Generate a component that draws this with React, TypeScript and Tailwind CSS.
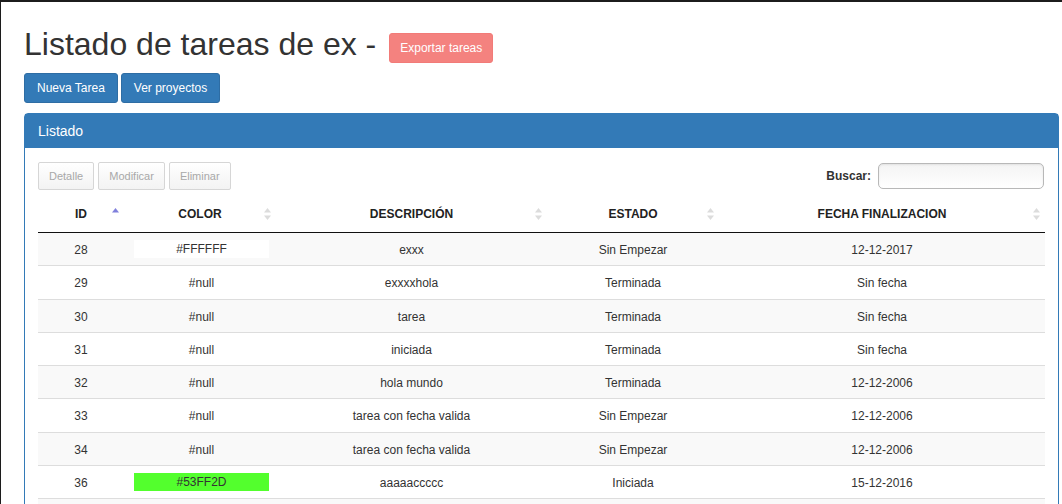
import React from 'react';

type Row = {
  id: string;
  color: string;
  swatch?: string;
  desc: string;
  estado: string;
  fecha: string;
};

const rows: Row[] = [
  { id: '28', color: '#FFFFFF', swatch: '#ffffff', desc: 'exxx', estado: 'Sin Empezar', fecha: '12-12-2017' },
  { id: '29', color: '#null', desc: 'exxxxhola', estado: 'Terminada', fecha: 'Sin fecha' },
  { id: '30', color: '#null', desc: 'tarea', estado: 'Terminada', fecha: 'Sin fecha' },
  { id: '31', color: '#null', desc: 'iniciada', estado: 'Terminada', fecha: 'Sin fecha' },
  { id: '32', color: '#null', desc: 'hola mundo', estado: 'Terminada', fecha: '12-12-2006' },
  { id: '33', color: '#null', desc: 'tarea con fecha valida', estado: 'Sin Empezar', fecha: '12-12-2006' },
  { id: '34', color: '#null', desc: 'tarea con fecha valida', estado: 'Sin Empezar', fecha: '12-12-2006' },
  { id: '36', color: '#53FF2D', swatch: '#53ff2d', desc: 'aaaaaccccc', estado: 'Iniciada', fecha: '15-12-2016' },
];

function SortIcon({ active }: { active?: boolean }) {
  return (
    <svg
      width="7"
      height="12"
      viewBox="0 0 7 12"
      className="absolute right-[5px] top-1/2 -translate-y-1/2"
    >
      <path d="M0 4.5 L3.5 0 L7 4.5 Z" fill={active ? '#8080dc' : '#dcdcdc'} />
      {!active && <path d="M0 7.5 L7 7.5 L3.5 12 Z" fill="#dcdcdc" />}
    </svg>
  );
}

const headers = [
  { label: 'ID', active: true },
  { label: 'COLOR' },
  { label: 'DESCRIPCIÓN' },
  { label: 'ESTADO' },
  { label: 'FECHA FINALIZACION' },
];

export default function App() {
  return (
    <div
      className="w-[1062px] h-[504px] overflow-hidden bg-white border-t-2 border-l border-[#1c1c1c] pl-[23px] pt-[25px] text-[#333]"
      style={{ fontFamily: '"Liberation Sans", Arial, sans-serif' }}
    >
      <div className="flex items-start">
        <h1 className="text-[32px] leading-[1.1] font-normal text-[#333]">Listado de tareas de ex -</h1>
        <button className="ml-[13px] mt-[6px] px-[10px] py-[5px] text-[12px] leading-[18px] text-white bg-[#f4827f] border border-[#f27b78] rounded-[3px]">
          Exportar tareas
        </button>
      </div>

      <div className="flex gap-[3px] mt-[10px]">
        <button className="px-3 py-[5px] text-[12px] leading-[18px] text-white bg-[#337ab7] border border-[#2e6da4] rounded-[3px]">
          Nueva Tarea
        </button>
        <button className="px-3 py-[5px] text-[12px] leading-[18px] text-white bg-[#337ab7] border border-[#2e6da4] rounded-[3px]">
          Ver proyectos
        </button>
      </div>

      <div className="mt-[10px] w-[1035px] border border-[#337ab7] rounded-t-[4px]">
        <div className="bg-[#337ab7] text-white text-[14px] leading-[18px] px-[13px] pt-[8px] pb-[8px]">Listado</div>
        <div className="px-[13px] pt-[14px]">
          <div className="flex items-center justify-between">
            <div className="flex gap-[4px]">
              {['Detalle', 'Modificar', 'Eliminar'].map((b) => (
                <button
                  key={b}
                  className="h-[28px] px-[10px] text-[11px] text-[#a8a8a8] bg-gradient-to-b from-white to-[#f3f3f3] border border-[#d6d6d6] rounded-[2px]"
                >
                  {b}
                </button>
              ))}
            </div>
            <div className="flex items-center mr-[1px]">
              <span className="text-[12px] font-bold text-[#333]">Buscar:</span>
              <input className="ml-[7px] w-[166px] h-[26px] border border-[#b8b8b8] rounded-[5px] bg-gradient-to-b from-[#f4f4f4] to-white shadow-[inset_0_1px_2px_rgba(0,0,0,0.08)] outline-none" />
            </div>
          </div>

          <table className="mt-[6px] w-[1007px] table-fixed border-collapse text-[12px]">
            <colgroup>
              <col className="w-[86px]" />
              <col className="w-[152px]" />
              <col className="w-[271px]" />
              <col className="w-[172px]" />
              <col className="w-[326px]" />
            </colgroup>
            <thead>
              <tr>
                {headers.map((h) => (
                  <th
                    key={h.label}
                    className="relative pt-[10px] pb-[9px] px-[10px] leading-[17px] font-bold text-center text-[#222] border-b border-[#111]"
                  >
                    {h.label}
                    <SortIcon active={h.active} />
                  </th>
                ))}
              </tr>
            </thead>
            <tbody>
              {rows.map((r, i) => (
                <tr key={r.id} className={i % 2 === 0 ? 'bg-[#f9f9f9]' : 'bg-white'}>
                  <td className="pt-[9px] pb-[7px] px-[10px] leading-[16.25px] text-center border-t border-[#ddd]">{r.id}</td>
                  <td className="pt-[9px] pb-[7px] pl-[10px] pr-[7px] leading-[16.25px] text-center border-t border-[#ddd]">
                    {r.swatch ? (
                      <div className="h-[18px] leading-[18px] -mt-[2px] mb-0" style={{ backgroundColor: r.swatch }}>
                        {r.color}
                      </div>
                    ) : (
                      r.color
                    )}
                  </td>
                  <td className="pt-[9px] pb-[7px] px-[10px] leading-[16.25px] text-center border-t border-[#ddd]">{r.desc}</td>
                  <td className="pt-[9px] pb-[7px] px-[10px] leading-[16.25px] text-center border-t border-[#ddd]">{r.estado}</td>
                  <td className="pt-[9px] pb-[7px] px-[10px] leading-[16.25px] text-center border-t border-[#ddd]">{r.fecha}</td>
                </tr>
              ))}
              <tr className="bg-[#f9f9f9]">
                <td className="py-2 leading-[16.25px] border-t border-[#ddd]">&nbsp;</td>
                <td className="border-t border-[#ddd]"></td>
                <td className="border-t border-[#ddd]"></td>
                <td className="border-t border-[#ddd]"></td>
                <td className="border-t border-[#ddd]"></td>
              </tr>
            </tbody>
          </table>
        </div>
      </div>
    </div>
  );
}
